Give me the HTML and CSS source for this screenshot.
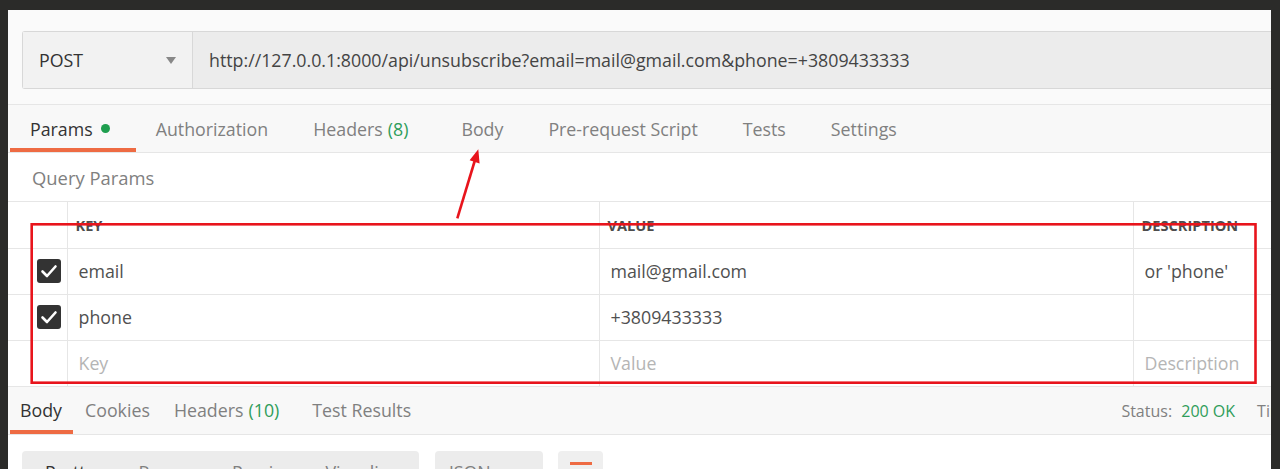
FILE: index.html
```html
<!DOCTYPE html>
<html lang="en">

<head>
    <meta charset="UTF-8">
    <meta name="viewport" content="width=device-width, initial-scale=1.0">
    <title>Unsubscribe request</title>

    <link rel="stylesheet" href="styles.css">
</head>

<body>

    <div class="window">
        <div class="request">
            <div class="url-bar">
                <div class="method">
                    POST
                    <span class="method__caret"></span>
                </div>
                <div class="url">http://127.0.0.1:8000/api/unsubscribe?email=mail@gmail.com&amp;phone=+3809433333</div>
            </div>
        </div>

        <ul class="tabs">
            <li class="tabs__item tabs__item--active">Params <span class="dot"></span></li>
            <li class="tabs__item">Authorization</li>
            <li class="tabs__item tabs__item--wide">Headers <span class="count">(8)</span></li>
            <li class="tabs__item">Body</li>
            <li class="tabs__item">Pre-request Script</li>
            <li class="tabs__item">Tests</li>
            <li class="tabs__item">Settings</li>
        </ul>

        <div class="section-title">Query Params</div>

        <table class="params">
            <colgroup>
                <col class="params__check">
                <col class="params__key">
                <col class="params__value">
                <col>
            </colgroup>
            <thead>
                <tr>
                    <th></th>
                    <th>Key</th>
                    <th>Value</th>
                    <th>Description</th>
                </tr>
            </thead>
            <tbody>
                <tr>
                    <td class="params__box">
                        <svg class="checkbox" width="24" height="24" viewBox="0 0 24 24">
                            <rect width="24" height="24" rx="3" fill="#333"/>
                            <path d="M5.5 12.5 L10 17 L18.5 7.5" fill="none" stroke="#fff" stroke-width="2.6" stroke-linecap="round" stroke-linejoin="round"/>
                        </svg>
                    </td>
                    <td>email</td>
                    <td>mail@gmail.com</td>
                    <td>or 'phone'</td>
                </tr>
                <tr>
                    <td class="params__box">
                        <svg class="checkbox" width="24" height="24" viewBox="0 0 24 24">
                            <rect width="24" height="24" rx="3" fill="#333"/>
                            <path d="M5.5 12.5 L10 17 L18.5 7.5" fill="none" stroke="#fff" stroke-width="2.6" stroke-linecap="round" stroke-linejoin="round"/>
                        </svg>
                    </td>
                    <td>phone</td>
                    <td>+3809433333</td>
                    <td></td>
                </tr>
                <tr class="params__empty">
                    <td class="params__box"></td>
                    <td>Key</td>
                    <td>Value</td>
                    <td>Description</td>
                </tr>
            </tbody>
        </table>

        <div class="tabs tabs--response">
            <ul class="tabs__list">
                <li class="tabs__item tabs__item--active">Body</li>
                <li class="tabs__item">Cookies</li>
                <li class="tabs__item tabs__item--wide">Headers <span class="count">(10)</span></li>
                <li class="tabs__item">Test Results</li>
            </ul>
            <div class="status">
                <span>Status: <span class="count">200 OK</span></span>
                <span>Time: 38 ms</span>
            </div>
        </div>

        <div class="toolbar">
            <div class="toolbar__group">
                <span class="toolbar__option toolbar__option--active">Pretty</span>
                <span class="toolbar__option">Raw</span>
                <span class="toolbar__option">Preview</span>
                <span class="toolbar__option">Visualize</span>
            </div>
            <div class="toolbar__select">JSON</div>
            <div class="toolbar__wrap"><span class="toolbar__line"></span></div>
        </div>
    </div>

    <svg class="annotation" width="1280" height="469" viewBox="0 0 1280 469">
        <rect x="31.7" y="224.3" width="1223.8" height="158.4" fill="none" stroke="#e8141c" stroke-width="2.6"/>
        <line x1="457.3" y1="218.3" x2="475" y2="160" stroke="#e8141c" stroke-width="2.6"/>
        <polygon points="478.3,149.3 479.6,163.4 469.6,160.2" fill="#e8141c"/>
    </svg>

</body>

</html>
```

FILE: styles.css
```css
* {
    box-sizing: border-box;
}

body {
    margin: 0;
    height: 469px;
    overflow: hidden;
    position: relative;
    background: #2b2b29;
    font-family: "Open Sans", "Liberation Sans", sans-serif;
    font-size: 17.8px;
    color: #505050;
}

.window {
    margin: 10px 9px 0 8px;
    height: 459px;
    overflow: hidden;
    background: #fafafa;
}

.request {
    padding: 21px 0 15px 14px;
    border-bottom: 1px solid #e6e6e6;
}

.url-bar {
    display: flex;
    height: 58px;
    border: 1px solid #d8d8d8;
    border-right: 0;
    border-radius: 3px 0 0 3px;
    background: #ececec;
}

.method {
    display: flex;
    align-items: center;
    justify-content: space-between;
    width: 170px;
    padding: 0 16px;
    border-right: 1px solid #d8d8d8;
    background: #f2f2f2;
    color: #333;
}

.method__caret {
    width: 0;
    height: 0;
    border-left: 5px solid transparent;
    border-right: 5px solid transparent;
    border-top: 7px solid #888;
}

.url {
    display: flex;
    align-items: center;
    padding-left: 16px;
    color: #444;
    white-space: nowrap;
}

.tabs {
    display: flex;
    height: 48px;
    margin: 0;
    padding: 0 0 0 2px;
    list-style: none;
    background: #f8f8f8;
    border-bottom: 1px solid #e6e6e6;
}

.tabs__list {
    display: flex;
    margin: 0;
    padding: 0;
    list-style: none;
}

.tabs__item {
    display: flex;
    align-items: center;
    padding: 4px 25px 0 20px;
    color: #808080;
    border-bottom: 4px solid transparent;
}

.tabs__item--wide {
    padding-right: 33px;
}

.tabs__item--active {
    color: #333;
    border-bottom-color: #ee6b43;
}

.dot {
    width: 9px;
    height: 9px;
    margin: 0 1px 0 8px;
    border-radius: 50%;
    background: #1f9e4f;
}

.count {
    margin-left: 5px;
    color: #2f9d5a;
}

.section-title {
    height: 49px;
    padding-left: 24px;
    display: flex;
    align-items: center;
    background: #fff;
    font-size: 18.4px;
    color: #808080;
    border-bottom: 1px solid #e6e6e6;
}

.params {
    width: 100%;
    table-layout: fixed;
    border-collapse: collapse;
    background: #fff;
}

.params__check {
    width: 59px;
}

.params__key {
    width: 532px;
}

.params__value {
    width: 534px;
}

.params th,
.params td {
    height: 46px;
    padding: 0 11px;
    border-bottom: 1px solid #e6e6e6;
    border-left: 1px solid #e6e6e6;
    text-align: left;
    white-space: nowrap;
    overflow: hidden;
}

.params th {
    padding: 0 8px;
    font-size: 14.6px;
    font-weight: 700;
    text-transform: uppercase;
    color: #4d4d4d;
}

.params th:first-child,
.params td:first-child {
    border-left: 0;
}

.params__box {
    padding: 0 0 0 29px !important;
}

.checkbox {
    display: block;
}

.params__empty td {
    color: #b5b5b5;
}

.tabs--response .tabs__item {
    padding: 4px 12px 0 12px;
}

.tabs--response .tabs__item:first-child {
    padding: 4px 11px 0 10px;
}

.tabs--response .tabs__item--wide {
    padding-right: 21px;
}

.status {
    display: flex;
    align-items: center;
    gap: 22px;
    margin-left: auto;
    margin-right: -76px;
    padding-top: 2px;
    font-size: 16px;
    color: #808080;
    white-space: nowrap;
}

.toolbar {
    display: flex;
    gap: 16px;
    padding: 16px 0 0 14px;
    background: #fff;
    height: 100%;
}

.toolbar__group {
    display: flex;
    width: 397px;
    height: 40px;
    padding: 9px 0 0 23px;
    border-radius: 4px;
    background: #ececec;
}

.toolbar__option {
    width: 94px;
    color: #808080;
}

.toolbar__option--active {
    color: #333;
}

.toolbar__select {
    width: 108px;
    height: 40px;
    padding: 9px 0 0 14px;
    border-radius: 4px;
    background: #ececec;
    color: #808080;
}

.toolbar__wrap {
    width: 45px;
    height: 40px;
    margin-left: -1px;
    padding: 11px 0 0 12px;
    border-radius: 4px;
    background: #efefef;
}

.toolbar__line {
    display: block;
    width: 22px;
    height: 3px;
    background: #ee6b43;
}

.annotation {
    position: absolute;
    top: 0;
    left: 0;
    pointer-events: none;
}
```
